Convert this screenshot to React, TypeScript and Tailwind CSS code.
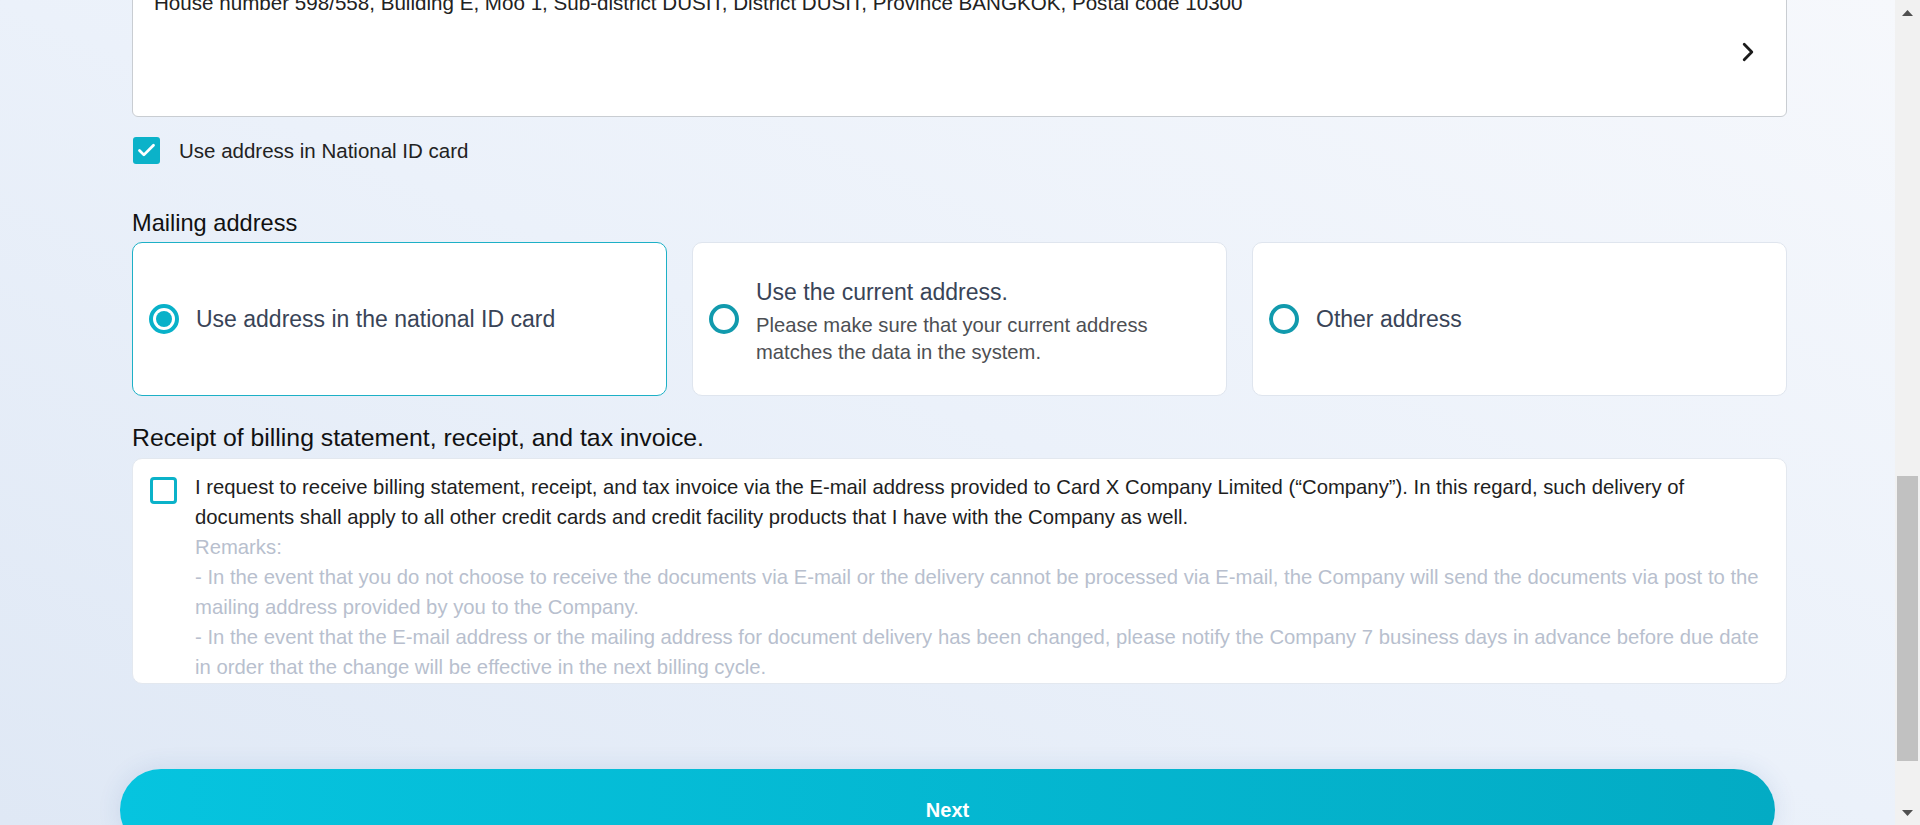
import { Check } from "lucide-react";

function Radio({ checked, muted }: { checked?: boolean; muted?: boolean }) {
  return (
    <span
      className={`flex h-[30px] w-[30px] shrink-0 items-center justify-center rounded-full border-[4px] bg-white ${
        muted ? "border-[#119aad]" : "border-[#08b1c9]"
      }`}
    >
      {checked && <span className="h-[16px] w-[16px] rounded-full bg-[#08b1c9]" />}
    </span>
  );
}

function Scrollbar() {
  return (
    <div className="flex w-[25px] shrink-0 flex-col bg-[#f1f1f1]">
      <div className="flex h-[25px] items-center justify-center">
        <svg width="11" height="6" viewBox="0 0 11 6">
          <path d="M5.5 0 L11 6 L0 6 Z" fill="#505050" />
        </svg>
      </div>
      <div className="flex-1">
        <div className="mx-[2px] mt-[451px] h-[285px] bg-[#c1c1c1]" />
      </div>
      <div className="flex h-[25px] items-center justify-center">
        <svg width="11" height="6" viewBox="0 0 11 6">
          <path d="M0 0 L11 0 L5.5 6 Z" fill="#505050" />
        </svg>
      </div>
    </div>
  );
}

export default function App() {
  return (
    <div className="flex h-screen w-full overflow-hidden font-['Liberation_Sans',Arial,sans-serif]">
      <main className="flex-1 overflow-hidden bg-linear-to-tr from-[#dfe8f5] via-[#ebf1fa] to-[#f6f8fc]">
        <div className="-mt-[26px] ml-[132px] w-[1655px]">
          {/* current address box */}
          <div className="flex h-[143px] items-start rounded-[6px] border border-[#c9cdd2] bg-white pl-[21px] pr-[32px] pt-[13px]">
            <p className="flex-1 text-[20.6px] leading-[30px] text-[#222]">
              House number 598/558, Building E, Moo 1, Sub-district DUSIT, District DUSIT, Province BANGKOK, Postal code 10300
            </p>
            <svg width="12" height="20" viewBox="0 0 12 20" className="self-center">
              <path
                d="M2.2 2.2 L9.8 10 L2.2 17.8"
                fill="none"
                stroke="#1b1b1b"
                strokeWidth="2.8"
                strokeLinecap="round"
                strokeLinejoin="round"
              />
            </svg>
          </div>

          <label className="mt-[20px] flex items-center gap-[19px] pl-px">
            <span className="flex h-[27px] w-[27px] items-center justify-center rounded-[3px] bg-[#0bb2c9]">
              <Check className="h-[21px] w-[21px] text-white" strokeWidth={3.2} />
            </span>
            <span className="text-[20.5px] leading-[27px] text-[#222]">Use address in National ID card</span>
          </label>

          <h2 className="mt-[45px] text-[23.6px] leading-[28px] text-[#111]">Mailing address</h2>
          <div className="mt-[5px] grid grid-cols-3 gap-[25px]">
            <div className="flex h-[154px] items-center gap-[17px] rounded-[10px] border border-[#1db0c6] bg-white pl-[16px] pr-[16px]">
              <Radio checked />
              <span className="text-[23px] leading-[30px] text-[#394457]">Use address in the national ID card</span>
            </div>
            <div className="flex h-[154px] items-center gap-[17px] rounded-[10px] border border-[#dfe5ee] bg-white pl-[16px] pr-[16px]">
              <Radio muted />
              <div className="mt-[5px]">
                <div className="text-[23px] leading-[30px] text-[#394457]">Use the current address.</div>
                <div className="mt-[5px] text-[20.2px] leading-[27px] text-[#4d4f53]">
                  Please make sure that your current address matches the data in the system.
                </div>
              </div>
            </div>
            <div className="flex h-[154px] items-center gap-[17px] rounded-[10px] border border-[#dfe5ee] bg-white pl-[16px] pr-[16px]">
              <Radio muted />
              <span className="text-[23px] leading-[30px] text-[#394457]">Other address</span>
            </div>
          </div>

          <h2 className="mt-[28px] text-[24.8px] leading-[28px] text-[#111]">
            Receipt of billing statement, receipt, and tax invoice.
          </h2>
          <div className="mt-[6px] flex items-start gap-[18px] rounded-[10px] border border-[#e3e8ef] bg-white pb-px pl-[17px] pr-[4px] pt-[13px]">
            <span className="mt-[5px] h-[27px] w-[27px] shrink-0 rounded-[4px] border-[3px] border-[#0bb2c9] bg-white" />
            <div className="text-[20.3px] leading-[30px]">
              <p className="text-[#1e1e1e]">
                I request to receive billing statement, receipt, and tax invoice via the E-mail address provided to Card X Company Limited (“Company”). In this regard, such delivery of
                <br />
                documents shall apply to all other credit cards and credit facility products that I have with the Company as well.
              </p>
              <p className="text-[#b8bfce]">
                Remarks:
                <br />
                - In the event that you do not choose to receive the documents via E-mail or the delivery cannot be processed via E-mail, the Company will send the documents via post to the
                <br />
                mailing address provided by you to the Company.
                <br />
                - In the event that the E-mail address or the mailing address for document delivery has been changed, please notify the Company 7 business days in advance before due date
                <br />
                in order that the change will be effective in the next billing cycle.
              </p>
            </div>
          </div>

          <button className="-ml-[12px] mt-[85px] flex h-[82px] w-[1655px] items-center justify-center rounded-full bg-linear-to-r from-[#06c4df] to-[#03abc4] text-[20px] font-bold text-white shadow-[0_0_24px_rgba(40,90,160,0.12)]">
            Next
          </button>
        </div>
      </main>
      <Scrollbar />
    </div>
  );
}
